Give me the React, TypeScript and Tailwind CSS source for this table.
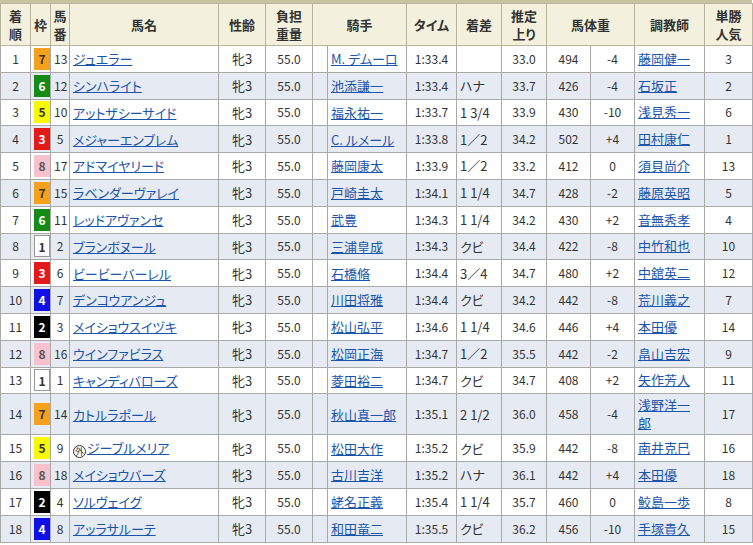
const WAKU: Record<number, string> = {
  1: "bg-white text-[#333] border border-[#999]",
  2: "bg-black text-white",
  3: "bg-[#e41a1a] text-white",
  4: "bg-[#1010e6] text-white",
  5: "bg-[#f8f800] text-[#333]",
  6: "bg-[#168a16] text-white",
  7: "bg-[#f6a11e] text-[#333]",
  8: "bg-[#f8c2cc] text-[#555]",
};

type Row = {
  rank: number;
  waku: number;
  num: number;
  name: string;
  foreign?: boolean;
  jockey: string;
  time: string;
  margin: string;
  last3f: string;
  weight: number;
  diff: string;
  trainer: string;
  pop: number;
};

const ROWS: Row[] = [
  { rank: 1, waku: 7, num: 13, name: "ジュエラー", jockey: "M. デムーロ", time: "1:33.4", margin: "", last3f: "33.0", weight: 494, diff: "-4", trainer: "藤岡健一", pop: 3 },
  { rank: 2, waku: 6, num: 12, name: "シンハライト", jockey: "池添謙一", time: "1:33.4", margin: "ハナ", last3f: "33.7", weight: 426, diff: "-4", trainer: "石坂正", pop: 2 },
  { rank: 3, waku: 5, num: 10, name: "アットザシーサイド", jockey: "福永祐一", time: "1:33.7", margin: "1 3/4", last3f: "33.9", weight: 430, diff: "-10", trainer: "浅見秀一", pop: 6 },
  { rank: 4, waku: 3, num: 5, name: "メジャーエンブレム", jockey: "C. ルメール", time: "1:33.8", margin: "1／2", last3f: "34.2", weight: 502, diff: "+4", trainer: "田村康仁", pop: 1 },
  { rank: 5, waku: 8, num: 17, name: "アドマイヤリード", jockey: "藤岡康太", time: "1:33.9", margin: "1／2", last3f: "33.2", weight: 412, diff: "0", trainer: "須貝尚介", pop: 13 },
  { rank: 6, waku: 7, num: 15, name: "ラベンダーヴァレイ", jockey: "戸崎圭太", time: "1:34.1", margin: "1 1/4", last3f: "34.7", weight: 428, diff: "-2", trainer: "藤原英昭", pop: 5 },
  { rank: 7, waku: 6, num: 11, name: "レッドアヴァンセ", jockey: "武豊", time: "1:34.3", margin: "1 1/4", last3f: "34.2", weight: 430, diff: "+2", trainer: "音無秀孝", pop: 4 },
  { rank: 8, waku: 1, num: 2, name: "ブランボヌール", jockey: "三浦皇成", time: "1:34.3", margin: "クビ", last3f: "34.4", weight: 422, diff: "-8", trainer: "中竹和也", pop: 10 },
  { rank: 9, waku: 3, num: 6, name: "ビービーバーレル", jockey: "石橋脩", time: "1:34.4", margin: "3／4", last3f: "34.7", weight: 480, diff: "+2", trainer: "中舘英二", pop: 12 },
  { rank: 10, waku: 4, num: 7, name: "デンコウアンジュ", jockey: "川田将雅", time: "1:34.4", margin: "クビ", last3f: "34.2", weight: 442, diff: "-8", trainer: "荒川義之", pop: 7 },
  { rank: 11, waku: 2, num: 3, name: "メイショウスイヅキ", jockey: "松山弘平", time: "1:34.6", margin: "1 1/4", last3f: "34.6", weight: 446, diff: "+4", trainer: "本田優", pop: 14 },
  { rank: 12, waku: 8, num: 16, name: "ウインファビラス", jockey: "松岡正海", time: "1:34.7", margin: "1／2", last3f: "35.5", weight: 442, diff: "-2", trainer: "畠山吉宏", pop: 9 },
  { rank: 13, waku: 1, num: 1, name: "キャンディバローズ", jockey: "菱田裕二", time: "1:34.7", margin: "クビ", last3f: "34.7", weight: 408, diff: "+2", trainer: "矢作芳人", pop: 11 },
  { rank: 14, waku: 7, num: 14, name: "カトルラポール", jockey: "秋山真一郎", time: "1:35.1", margin: "2 1/2", last3f: "36.0", weight: 458, diff: "-4", trainer: "浅野洋一郎", pop: 17 },
  { rank: 15, waku: 5, num: 9, name: "ジーブルメリア", foreign: true, jockey: "松田大作", time: "1:35.2", margin: "クビ", last3f: "35.9", weight: 442, diff: "-8", trainer: "南井克巳", pop: 16 },
  { rank: 16, waku: 8, num: 18, name: "メイショウバーズ", jockey: "古川吉洋", time: "1:35.2", margin: "ハナ", last3f: "36.1", weight: 442, diff: "+4", trainer: "本田優", pop: 18 },
  { rank: 17, waku: 2, num: 4, name: "ソルヴェイグ", jockey: "蛯名正義", time: "1:35.4", margin: "1 1/4", last3f: "35.7", weight: 460, diff: "0", trainer: "鮫島一歩", pop: 8 },
  { rank: 18, waku: 4, num: 8, name: "アッラサルーテ", jockey: "和田竜二", time: "1:35.5", margin: "クビ", last3f: "36.2", weight: 456, diff: "-10", trainer: "手塚貴久", pop: 15 },
];

const COLS = [30, 20, 19, 149, 47, 47, 15, 79, 50, 45, 45, 44, 44, 70, 48];

const th = "border border-[#b9b59c] bg-[#f3f1dd] font-bold text-[13px] leading-[18px] text-[#333] text-center align-middle p-0";
const td = "border border-[#a9a9a9] text-[12px] text-[#333] align-middle px-[3px] py-0";
const link = "text-[#1a55ab] underline";

export default function App() {
  return (
    <div
      className="bg-white w-[753px] h-[545px] overflow-hidden [font-feature-settings:'palt']"
      style={{ fontFamily: '"Noto Sans CJK JP", "Noto Sans", sans-serif' }}
    >
      <div className="h-[3px] w-[752px] bg-[#c6c2a2]" />
      <table className="border-collapse table-fixed w-[752px]">
        <colgroup>
          {COLS.map((w, i) => (
            <col key={i} style={{ width: w }} />
          ))}
        </colgroup>
        <thead>
          <tr className="h-[42px]">
            <th className={th}>着<br />順</th>
            <th className={th}>枠</th>
            <th className={th}>馬<br />番</th>
            <th className={th}>馬名</th>
            <th className={th}>性齢</th>
            <th className={th}>負担<br />重量</th>
            <th className={th} colSpan={2}>騎手</th>
            <th className={th}>タイム</th>
            <th className={th}>着差</th>
            <th className={th}>推定<br />上り</th>
            <th className={th} colSpan={2}>馬体重</th>
            <th className={th}>調教師</th>
            <th className={th}>単勝<br />人気</th>
          </tr>
        </thead>
        <tbody>
          {ROWS.map((r) => (
            <tr
              key={r.rank}
              className={`${r.rank === 14 ? "h-[41px]" : "h-[26.8px]"} ${
                r.rank % 2 === 0 ? "bg-[#e6ebf3]" : "bg-white"
              }`}
            >
              <td className={`${td} text-center`}>{r.rank}</td>
              <td className={`${td} text-center px-0`}>
                <span
                  className={`inline-block w-4 h-[22px] leading-[22px] text-center font-bold text-[12px] align-middle ${WAKU[r.waku]}`}
                >
                  {r.waku}
                </span>
              </td>
              <td className={`${td} text-center px-0`}>{r.num}</td>
              <td className={`${td} text-[13px]`}>
                {r.foreign && (
                  <span className="inline-flex items-center justify-center w-[13px] h-[13px] mr-[1px] rounded-full border border-[#333] text-[9px] leading-none align-[-2px]">
                    外
                  </span>
                )}
                <a className={link}>{r.name}</a>
              </td>
              <td className={`${td} text-center text-[13px]`}>牝3</td>
              <td className={`${td} text-center`}>55.0</td>
              <td className={td}></td>
              <td className={`${td} text-[13px] whitespace-nowrap`}>
                <a className={link}>{r.jockey}</a>
              </td>
              <td className={`${td} text-center`}>{r.time}</td>
              <td className={`${td} text-[13px]`}>{r.margin}</td>
              <td className={`${td} text-center`}>{r.last3f}</td>
              <td className={`${td} text-center`}>{r.weight}</td>
              <td className={`${td} text-center`}>{r.diff}</td>
              <td className={`${td} text-[13px] pr-[5px] leading-[18px]`}>
                <a className={link}>{r.trainer}</a>
              </td>
              <td className={`${td} text-center`}>{r.pop}</td>
            </tr>
          ))}
        </tbody>
      </table>
    </div>
  );
}
